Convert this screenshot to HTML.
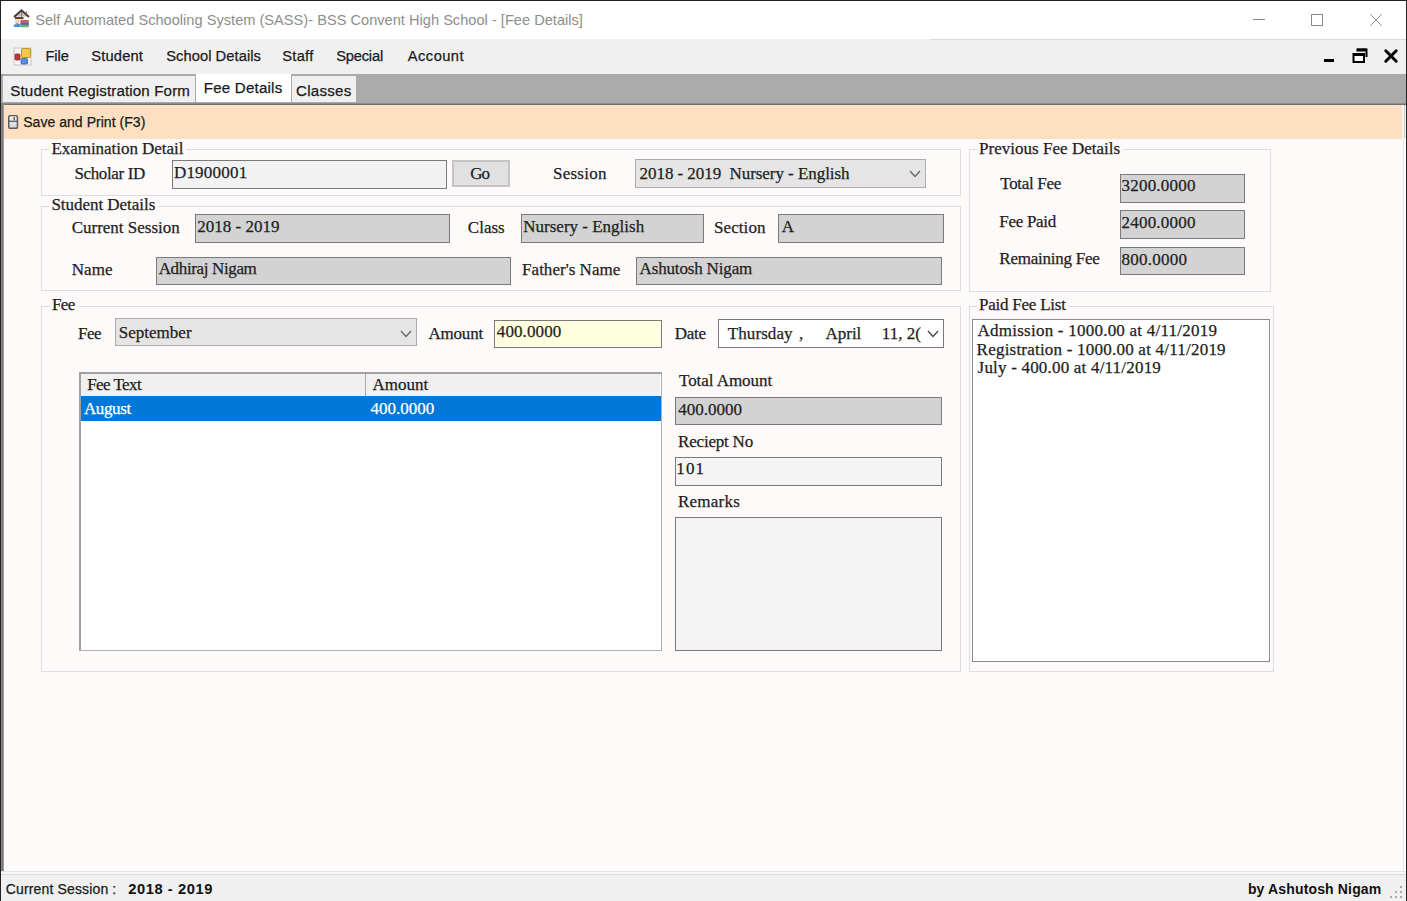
<!DOCTYPE html>
<html><head><meta charset="utf-8">
<style>
*{margin:0;padding:0;box-sizing:border-box}
html,body{width:1407px;height:901px;overflow:hidden;background:#fffafa}
body{position:relative;font-family:'Liberation Sans',sans-serif}
.a{position:absolute}
.t{position:absolute;white-space:pre;-webkit-text-stroke:0.25px currentColor}
.b{-webkit-text-stroke:0}
svg{position:absolute;overflow:visible}
</style></head>
<body>
<div class="a" style="left:0px;top:0px;width:1407px;height:901px;background:#fffafa"></div>
<div class="a" style="left:0px;top:0px;width:1407px;height:39px;background:#ffffff"></div>
<div class="t" style="left:35.20px;top:13.20px;font-family:'Liberation Sans',sans-serif;font-size:14.6px;line-height:14.6px;color:#8e8e8e;letter-spacing:0.013px;-webkit-text-stroke:0">Self Automated Schooling System (SASS)- BSS Convent High School - [Fee Details]</div>
<div class="a" style="left:1253px;top:19px;width:12px;height:1px;background:#8a8a8a"></div>
<div class="a" style="left:1311px;top:14px;width:12px;height:12px;border:1px solid #8a8a8a"></div>
<svg style="left:1370px;top:14px" width="12" height="12"><path d="M0.5 0.5L11.5 11.5M11.5 0.5L0.5 11.5" stroke="#8a8a8a" stroke-width="1"/></svg>
<div class="a" style="left:0px;top:39px;width:1407px;height:35px;background:#f0f0f0"></div>
<div class="a" style="left:930px;top:39px;width:476px;height:1px;background:#dadada"></div>
<div class="t" style="left:45.40px;top:49.30px;font-family:'Liberation Sans',sans-serif;font-size:14.7px;line-height:14.7px;color:#1a1a1a;letter-spacing:-0.033px">File</div>
<div class="t" style="left:91.20px;top:49.30px;font-family:'Liberation Sans',sans-serif;font-size:14.7px;line-height:14.7px;color:#1a1a1a;letter-spacing:0.183px">Student</div>
<div class="t" style="left:166.20px;top:49.30px;font-family:'Liberation Sans',sans-serif;font-size:14.7px;line-height:14.7px;color:#1a1a1a;letter-spacing:0.062px">School Details</div>
<div class="t" style="left:282.30px;top:49.30px;font-family:'Liberation Sans',sans-serif;font-size:14.7px;line-height:14.7px;color:#1a1a1a;letter-spacing:0.250px">Staff</div>
<div class="t" style="left:336.20px;top:49.30px;font-family:'Liberation Sans',sans-serif;font-size:14.7px;line-height:14.7px;color:#1a1a1a;letter-spacing:-0.200px">Special</div>
<div class="t" style="left:407.80px;top:49.30px;font-family:'Liberation Sans',sans-serif;font-size:14.7px;line-height:14.7px;color:#1a1a1a;letter-spacing:0.450px">Account</div>
<svg style="left:13px;top:47px" width="19" height="19">
<rect x="1" y="1" width="17" height="17" fill="#f6f6f6" stroke="#c4c4c4" stroke-width="1"/>
<rect x="8.5" y="1.5" width="9" height="9" rx="1.5" fill="#f2c94c" stroke="#b8962e" stroke-width="1"/>
<rect x="2" y="7" width="5" height="6" rx="1" fill="#c0392b" stroke="#8e1f1f" stroke-width="0.8"/>
<rect x="8" y="11.5" width="6.5" height="5.5" rx="1" fill="#5b8fd9" stroke="#2e5fa8" stroke-width="0.8"/>
</svg>
<div class="a" style="left:1324px;top:59px;width:10px;height:3px;background:#000"></div>
<svg style="left:1352px;top:48px" width="16" height="16">
<path d="M5 1.5H14.5V9" fill="none" stroke="#000" stroke-width="2"/>
<rect x="4.5" y="0.5" width="10" height="3" fill="#000"/>
<rect x="1.5" y="6" width="10.5" height="8" fill="#fff" stroke="#000" stroke-width="2"/>
<rect x="1" y="5" width="11.5" height="3" fill="#000"/>
</svg>
<svg style="left:1384px;top:49px" width="14" height="14"><path d="M1.8 1.8L12.2 12.2M12.2 1.8L1.8 12.2" stroke="#000" stroke-width="3" stroke-linecap="round"/></svg>
<svg style="left:10px;top:6.5px" width="22" height="24">
<path d="M5 9.5L11.5 3.5L18 9.5Z" fill="#cdbfb5"/>
<path d="M4 10L11.5 3.2L19 10" fill="none" stroke="#433a35" stroke-width="1.9"/>
<path d="M16.5 4.5V7.5" stroke="#7a6f6a" stroke-width="1"/>
<path d="M11.5 5V11" stroke="#7a6f6a" stroke-width="0.9"/>
<rect x="5" y="10" width="8.5" height="2.2" fill="#5e4338"/>
<ellipse cx="7.2" cy="14.3" rx="2.3" ry="2.2" fill="#f8d4b4"/>
<path d="M3.5 20Q3.7 16.3 7 16.2Q10.5 16.3 10.7 20Z" fill="#3d8fd6"/>
<path d="M4 19.5Q5 17 7 17" stroke="#8cc4f0" stroke-width="0.8" fill="none"/>
<rect x="10.3" y="13" width="8.6" height="3.2" rx="1.2" fill="#c2606a"/>
<rect x="10.3" y="16" width="8.6" height="2" fill="#5a5cb8"/>
<rect x="10.3" y="17.8" width="8.6" height="2.4" rx="1" fill="#5cb776"/>
</svg>
<div class="a" style="left:0px;top:74px;width:1407px;height:30px;background:#ababab"></div>
<div class="a" style="left:1px;top:74px;width:3px;height:2px;background:#a0a0a0"></div>
<div class="a" style="left:3px;top:76px;width:192px;height:26px;background:#f0f0f0"></div>
<div class="t" style="left:10.30px;top:83.00px;font-family:'Liberation Sans',sans-serif;font-size:15.1px;line-height:15.1px;color:#1a1a1a;letter-spacing:0.142px">Student Registration Form</div>
<div class="a" style="left:196px;top:74px;width:95px;height:29px;background:#ffffff"></div>
<div class="t" style="left:203.80px;top:80.30px;font-family:'Liberation Sans',sans-serif;font-size:15.1px;line-height:15.1px;color:#1a1a1a;letter-spacing:0.210px">Fee Details</div>
<div class="a" style="left:292px;top:76px;width:64px;height:26px;background:#f0f0f0"></div>
<div class="t" style="left:296.00px;top:82.90px;font-family:'Liberation Sans',sans-serif;font-size:15.1px;line-height:15.1px;color:#1a1a1a;letter-spacing:0.250px">Classes</div>
<div class="a" style="left:1px;top:102px;width:1405px;height:3px;background:linear-gradient(#b8b8b8,#606060)"></div>
<div class="a" style="left:1px;top:105px;width:3px;height:33px;background:#a0a0a0"></div>
<div class="a" style="left:1402px;top:105px;width:4px;height:33px;background:#f4f4f4"></div>
<div class="a" style="left:1404px;top:105px;width:1px;height:33px;background:#c8c8c8"></div>
<div class="a" style="left:4px;top:105px;width:1398px;height:34px;background:#fde0c2"></div>
<svg style="left:8px;top:115px" width="11" height="14">
<defs><linearGradient id="fg" x1="0" y1="0" x2="0" y2="1"><stop offset="0" stop-color="#f8f8f8"/><stop offset="1" stop-color="#cfd3d6"/></linearGradient></defs>
<rect x="0.75" y="0.75" width="8.7" height="12.5" rx="1" fill="url(#fg)" stroke="#5a5a5a" stroke-width="1.5"/>
<rect x="2.3" y="1.5" width="5.5" height="4.2" fill="#ececec"/>
<rect x="5.6" y="2" width="1.4" height="3.2" fill="#5a5a5a"/>
<path d="M1 6.3H9.2" stroke="#5a5a5a" stroke-width="1.3"/>
</svg>
<div class="t" style="left:23.20px;top:115.30px;font-family:'Liberation Sans',sans-serif;font-size:14.0px;line-height:14.0px;color:#1a1a1a;letter-spacing:0.044px">Save and Print (F3)</div>
<div class="a" style="left:1px;top:103px;width:3px;height:769px;background:linear-gradient(90deg,#8a8a8a,#7a7a7a 60%,#b0b0b0)"></div>
<div class="a" style="left:1403px;top:138px;width:1px;height:734px;background:#e6e6e6"></div>
<div class="a" style="left:1404px;top:138px;width:2px;height:734px;background:#ffffff"></div>
<div class="a" style="left:0px;top:0px;width:1px;height:901px;background:#222"></div>
<div class="a" style="left:0px;top:0px;width:1407px;height:1px;background:#222"></div>
<div class="a" style="left:1406px;top:0px;width:1px;height:901px;background:#222"></div>
<div class="a" style="left:1px;top:871px;width:1405px;height:1px;background:#e4e4e4"></div>
<div class="a" style="left:1px;top:872px;width:1405px;height:2px;background:#f8f8f8"></div>
<div class="a" style="left:1px;top:874px;width:1405px;height:1px;background:#dcdcdc"></div>
<div class="a" style="left:1px;top:875px;width:1405px;height:26px;background:#f0f0f0"></div>
<div class="t" style="left:5.80px;top:882.00px;font-family:'Liberation Sans',sans-serif;font-size:14.0px;line-height:14.0px;color:#1a1a1a;letter-spacing:0.144px">Current Session :</div>
<div class="t b" style="left:128.30px;top:882.00px;font-family:'Liberation Sans',sans-serif;font-size:14.7px;line-height:14.7px;color:#111;font-weight:bold;letter-spacing:0.560px">2018 - 2019</div>
<div class="t b" style="left:1247.90px;top:882.00px;font-family:'Liberation Sans',sans-serif;font-size:14.0px;line-height:14.0px;color:#111;font-weight:bold;letter-spacing:0.150px">by Ashutosh Nigam</div>
<div class="a" style="left:1400px;top:886px;width:2px;height:2px;background:#a8a8a8"></div>
<div class="a" style="left:1395px;top:891px;width:2px;height:2px;background:#a8a8a8"></div>
<div class="a" style="left:1400px;top:891px;width:2px;height:2px;background:#a8a8a8"></div>
<div class="a" style="left:1390px;top:896px;width:2px;height:2px;background:#a8a8a8"></div>
<div class="a" style="left:1395px;top:896px;width:2px;height:2px;background:#a8a8a8"></div>
<div class="a" style="left:1400px;top:896px;width:2px;height:2px;background:#a8a8a8"></div>
<div class="a" style="left:41px;top:149px;width:920px;height:47px;border:1px solid #dddddd"></div>
<div class="a" style="left:49.4px;top:148px;width:136.4px;height:3px;background:#fffafa"></div>
<div class="t" style="left:51.40px;top:140.00px;font-family:'Liberation Serif',serif;font-size:17px;line-height:17px;color:#1e1e1e;letter-spacing:-0.035px">Examination Detail</div>
<div class="t" style="left:74.40px;top:164.70px;font-family:'Liberation Serif',serif;font-size:17px;line-height:17px;color:#1e1e1e;letter-spacing:-0.367px">Scholar ID</div>
<div class="a" style="left:172px;top:160px;width:275px;height:29px;background:#f2f2f2;border:1px solid #7a7a7a"></div>
<div class="t" style="left:173.90px;top:163.70px;font-family:'Liberation Serif',serif;font-size:17px;line-height:17px;color:#1e1e1e;letter-spacing:0.214px">D1900001</div>
<div class="a" style="left:452px;top:160px;width:58px;height:27px;background:#e1e1e1;border:2px solid #c4c4c4"></div>
<div class="t" style="left:470.30px;top:164.50px;font-family:'Liberation Serif',serif;font-size:17px;line-height:17px;color:#1e1e1e;letter-spacing:-1.000px">Go</div>
<div class="t" style="left:552.90px;top:164.80px;font-family:'Liberation Serif',serif;font-size:17px;line-height:17px;color:#1e1e1e;letter-spacing:0.283px">Session</div>
<div class="a" style="left:635px;top:159px;width:291px;height:29px;background:#e5e5e5;border:1px solid #acacac"></div>
<div class="t" style="left:639.60px;top:164.80px;font-family:'Liberation Serif',serif;font-size:17px;line-height:17px;color:#1e1e1e;letter-spacing:-0.055px">2018 - 2019  Nursery - English</div>
<svg style="left:909px;top:170px" width="12" height="8"><path d="M1 1L6.0 6.5L11 1" fill="none" stroke="#606060" stroke-width="1.2"/></svg>
<div class="a" style="left:41px;top:206px;width:920px;height:85px;border:1px solid #dddddd"></div>
<div class="a" style="left:49.4px;top:205px;width:108.6px;height:3px;background:#fffafa"></div>
<div class="t" style="left:51.40px;top:196.10px;font-family:'Liberation Serif',serif;font-size:17px;line-height:17px;color:#1e1e1e;letter-spacing:-0.029px">Student Details</div>
<div class="t" style="left:71.70px;top:218.70px;font-family:'Liberation Serif',serif;font-size:17px;line-height:17px;color:#1e1e1e;letter-spacing:-0.007px">Current Session</div>
<div class="a" style="left:195px;top:214px;width:255px;height:29px;background:#d3d3d3;border:1px solid #7a7a7a"></div>
<div class="t" style="left:197.20px;top:217.70px;font-family:'Liberation Serif',serif;font-size:17px;line-height:17px;color:#1e1e1e;letter-spacing:0.010px">2018 - 2019</div>
<div class="t" style="left:467.80px;top:218.70px;font-family:'Liberation Serif',serif;font-size:17px;line-height:17px;color:#1e1e1e;letter-spacing:0.025px">Class</div>
<div class="a" style="left:521px;top:214px;width:183px;height:29px;background:#d3d3d3;border:1px solid #7a7a7a"></div>
<div class="t" style="left:523.30px;top:217.70px;font-family:'Liberation Serif',serif;font-size:17px;line-height:17px;color:#1e1e1e">Nursery - English</div>
<div class="t" style="left:714.00px;top:218.70px;font-family:'Liberation Serif',serif;font-size:17px;line-height:17px;color:#1e1e1e;letter-spacing:0.083px">Section</div>
<div class="a" style="left:778px;top:214px;width:166px;height:29px;background:#d3d3d3;border:1px solid #7a7a7a"></div>
<div class="t" style="left:781.80px;top:217.70px;font-family:'Liberation Serif',serif;font-size:17px;line-height:17px;color:#1e1e1e">A</div>
<div class="t" style="left:71.70px;top:260.50px;font-family:'Liberation Serif',serif;font-size:17px;line-height:17px;color:#1e1e1e;letter-spacing:0.100px">Name</div>
<div class="a" style="left:156px;top:257px;width:355px;height:28px;background:#d3d3d3;border:1px solid #7a7a7a"></div>
<div class="t" style="left:158.70px;top:259.50px;font-family:'Liberation Serif',serif;font-size:17px;line-height:17px;color:#1e1e1e;letter-spacing:-0.358px">Adhiraj Nigam</div>
<div class="t" style="left:522.10px;top:261.20px;font-family:'Liberation Serif',serif;font-size:17px;line-height:17px;color:#1e1e1e;letter-spacing:0.017px">Father's Name</div>
<div class="a" style="left:636px;top:257px;width:306px;height:28px;background:#d3d3d3;border:1px solid #7a7a7a"></div>
<div class="t" style="left:639.60px;top:259.50px;font-family:'Liberation Serif',serif;font-size:17px;line-height:17px;color:#1e1e1e;letter-spacing:-0.162px">Ashutosh Nigam</div>
<div class="a" style="left:969px;top:149px;width:302px;height:143px;border:1px solid #dddddd"></div>
<div class="a" style="left:977px;top:148px;width:145.5px;height:3px;background:#fffafa"></div>
<div class="t" style="left:979.00px;top:139.80px;font-family:'Liberation Serif',serif;font-size:17px;line-height:17px;color:#1e1e1e;letter-spacing:0.026px">Previous Fee Details</div>
<div class="t" style="left:1000.30px;top:175.40px;font-family:'Liberation Serif',serif;font-size:17px;line-height:17px;color:#1e1e1e;letter-spacing:-0.312px">Total Fee</div>
<div class="a" style="left:1120px;top:174px;width:125px;height:29px;background:#d3d3d3;border:1px solid #7a7a7a"></div>
<div class="t" style="left:1121.50px;top:177.30px;font-family:'Liberation Serif',serif;font-size:17px;line-height:17px;color:#1e1e1e;letter-spacing:0.213px">3200.0000</div>
<div class="t" style="left:999.30px;top:212.50px;font-family:'Liberation Serif',serif;font-size:17px;line-height:17px;color:#1e1e1e;letter-spacing:-0.300px">Fee Paid</div>
<div class="a" style="left:1120px;top:210px;width:125px;height:29px;background:#d3d3d3;border:1px solid #7a7a7a"></div>
<div class="t" style="left:1121.50px;top:213.50px;font-family:'Liberation Serif',serif;font-size:17px;line-height:17px;color:#1e1e1e;letter-spacing:0.213px">2400.0000</div>
<div class="t" style="left:999.30px;top:250.00px;font-family:'Liberation Serif',serif;font-size:17px;line-height:17px;color:#1e1e1e;letter-spacing:-0.233px">Remaining Fee</div>
<div class="a" style="left:1120px;top:247px;width:125px;height:28px;background:#d3d3d3;border:1px solid #7a7a7a"></div>
<div class="t" style="left:1121.50px;top:250.50px;font-family:'Liberation Serif',serif;font-size:17px;line-height:17px;color:#1e1e1e;letter-spacing:0.257px">800.0000</div>
<div class="a" style="left:41px;top:306px;width:920px;height:366px;border:1px solid #dddddd"></div>
<div class="a" style="left:50px;top:305px;width:27.799999999999997px;height:3px;background:#fffafa"></div>
<div class="t" style="left:52.00px;top:295.60px;font-family:'Liberation Serif',serif;font-size:17px;line-height:17px;color:#1e1e1e;letter-spacing:-0.600px">Fee</div>
<div class="t" style="left:78.00px;top:325.00px;font-family:'Liberation Serif',serif;font-size:17px;line-height:17px;color:#1e1e1e;letter-spacing:-0.500px">Fee</div>
<div class="a" style="left:115px;top:318px;width:302px;height:28px;background:#e5e5e5;border:1px solid #acacac"></div>
<div class="t" style="left:118.70px;top:323.80px;font-family:'Liberation Serif',serif;font-size:17px;line-height:17px;color:#1e1e1e;letter-spacing:0.025px">September</div>
<svg style="left:400px;top:330px" width="12" height="8"><path d="M1 1L6.0 6.5L11 1" fill="none" stroke="#606060" stroke-width="1.2"/></svg>
<div class="t" style="left:428.40px;top:325.30px;font-family:'Liberation Serif',serif;font-size:17px;line-height:17px;color:#1e1e1e;letter-spacing:-0.180px">Amount</div>
<div class="a" style="left:494px;top:320px;width:168px;height:28px;background:#ffffe0;border:1px solid #7a7a7a"></div>
<div class="t" style="left:496.80px;top:322.60px;font-family:'Liberation Serif',serif;font-size:17px;line-height:17px;color:#1e1e1e;letter-spacing:0.100px">400.0000</div>
<div class="t" style="left:674.80px;top:325.00px;font-family:'Liberation Serif',serif;font-size:17px;line-height:17px;color:#1e1e1e;letter-spacing:-0.267px">Date</div>
<div class="a" style="left:718px;top:319px;width:226px;height:29px;background:#ffffff;border:1px solid #7a7a7a"></div>
<div class="t" style="left:727.80px;top:325.00px;font-family:'Liberation Serif',serif;font-size:17px;line-height:17px;color:#1e1e1e;letter-spacing:0.071px">Thursday</div>
<div class="t" style="left:799.00px;top:325.00px;font-family:'Liberation Serif',serif;font-size:17px;line-height:17px;color:#1e1e1e">,</div>
<div class="t" style="left:825.60px;top:325.00px;font-family:'Liberation Serif',serif;font-size:17px;line-height:17px;color:#1e1e1e;letter-spacing:-0.050px">April</div>
<div class="t" style="left:881.80px;top:325.00px;font-family:'Liberation Serif',serif;font-size:17px;line-height:17px;color:#1e1e1e;letter-spacing:0.040px">11, 2(</div>
<div class="a" style="left:921px;top:321px;width:22px;height:26px;background:#ffffff"></div>
<svg style="left:927px;top:330px" width="12" height="8"><path d="M1 1L6.0 6.5L11 1" fill="none" stroke="#404040" stroke-width="1.2"/></svg>
<div class="a" style="left:79px;top:372px;width:583px;height:279px;background:#ffffff;border:2px solid #a0a0a0;border-right:1px solid #b0b0b0;border-bottom:1px solid #b0b0b0"></div>
<div class="a" style="left:81px;top:374px;width:579px;height:22px;background:#f0f0f0"></div>
<div class="a" style="left:365px;top:374px;width:1px;height:22px;background:#a8a8a8"></div>
<div class="t" style="left:87.20px;top:376.00px;font-family:'Liberation Serif',serif;font-size:17px;line-height:17px;color:#1e1e1e;letter-spacing:-0.571px">Fee Text</div>
<div class="t" style="left:372.50px;top:376.00px;font-family:'Liberation Serif',serif;font-size:17px;line-height:17px;color:#1e1e1e">Amount</div>
<div class="a" style="left:81px;top:396px;width:580px;height:25px;background:#0078d7"></div>
<div class="t" style="left:83.90px;top:399.70px;font-family:'Liberation Serif',serif;font-size:17px;line-height:17px;color:#ffffff;letter-spacing:-0.380px">August</div>
<div class="t" style="left:370.50px;top:399.70px;font-family:'Liberation Serif',serif;font-size:17px;line-height:17px;color:#ffffff">400.0000</div>
<div class="t" style="left:679.00px;top:372.20px;font-family:'Liberation Serif',serif;font-size:17px;line-height:17px;color:#1e1e1e;letter-spacing:-0.055px">Total Amount</div>
<div class="a" style="left:675px;top:397px;width:267px;height:28px;background:#d3d3d3;border:1px solid #7a7a7a"></div>
<div class="t" style="left:678.20px;top:400.80px;font-family:'Liberation Serif',serif;font-size:17px;line-height:17px;color:#1e1e1e">400.0000</div>
<div class="t" style="left:678.10px;top:433.00px;font-family:'Liberation Serif',serif;font-size:17px;line-height:17px;color:#1e1e1e;letter-spacing:-0.211px">Reciept No</div>
<div class="a" style="left:675px;top:457px;width:267px;height:29px;background:#f4f4f4;border:1px solid #7a7a7a"></div>
<div class="t" style="left:676.20px;top:460.40px;font-family:'Liberation Serif',serif;font-size:17px;line-height:17px;color:#1e1e1e;letter-spacing:1.200px">101</div>
<div class="t" style="left:678.00px;top:492.50px;font-family:'Liberation Serif',serif;font-size:17px;line-height:17px;color:#1e1e1e;letter-spacing:0.233px">Remarks</div>
<div class="a" style="left:675px;top:517px;width:267px;height:134px;background:#f4f4f4;border:1px solid #7a7a7a"></div>
<div class="a" style="left:969px;top:306px;width:305px;height:366px;border:1px solid #dddddd"></div>
<div class="a" style="left:977px;top:305px;width:92.20000000000005px;height:3px;background:#fffafa"></div>
<div class="t" style="left:979.00px;top:296.00px;font-family:'Liberation Serif',serif;font-size:17px;line-height:17px;color:#1e1e1e;letter-spacing:-0.233px">Paid Fee List</div>
<div class="a" style="left:972px;top:319px;width:298px;height:343px;background:#ffffff;border:1px solid #8c8c8c"></div>
<div class="t" style="left:977.60px;top:321.70px;font-family:'Liberation Serif',serif;font-size:17px;line-height:17px;color:#1e1e1e;letter-spacing:0.232px">Admission - 1000.00 at 4/11/2019</div>
<div class="t" style="left:976.60px;top:340.50px;font-family:'Liberation Serif',serif;font-size:17px;line-height:17px;color:#1e1e1e;letter-spacing:0.218px">Registration - 1000.00 at 4/11/2019</div>
<div class="t" style="left:977.60px;top:359.30px;font-family:'Liberation Serif',serif;font-size:17px;line-height:17px;color:#1e1e1e;letter-spacing:0.196px">July - 400.00 at 4/11/2019</div>
</body></html>
